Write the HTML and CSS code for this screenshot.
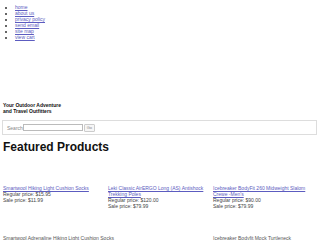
FILE: index.html
```html
<!DOCTYPE html>
<html>
<head>
<meta charset="utf-8">
<link rel="stylesheet" href="styles.css">
</head>
<body>
<ul class="nav">
  <li><a href="#">home</a></li>
  <li><a href="#">about us</a></li>
  <li><a href="#">privacy policy</a></li>
  <li><a href="#">send email</a></li>
  <li><a href="#">site map</a></li>
  <li><a href="#">view cart</a></li>
</ul>
<div class="logo-space"></div>
<div class="tagline">Your Outdoor Adventure<br>and Travel Outfitters</div>
<form class="search">
  <label>Search</label><input type="text" class="field"><button type="button" class="go">Go</button>
</form>
<h1 class="title">Featured Products</h1>
<div class="products">
  <div class="product">
    <a href="#">Smartwool Hiking Light Cushion Socks</a>
    <div>Regular price: $15.95</div>
    <div>Sale price: $11.99</div>
  </div>
  <div class="product">
    <a href="#">Leki Classic AirERGO Long (AS) Antishock Trekking Poles</a>
    <div>Regular price: $120.00</div>
    <div>Sale price: $79.99</div>
  </div>
  <div class="product">
    <a href="#">Icebreaker BodyFit 260 Midweight Slalom Crewe -Men's</a>
    <div>Regular price: $90.00</div>
    <div>Sale price: $79.99</div>
  </div>
</div>
<div class="more">
  <div class="more-left">Smartwool Adrenaline Hiking Light Cushion Socks</div>
  <div class="more-right">Icebreaker Bodyfit Mock Turtleneck</div>
</div>
</body>
</html>
```
FILE: styles.css
```css
html, body {
  margin: 0;
  padding: 0;
  background: #fff;
  overflow: hidden;
}
body {
  font-family: "Liberation Sans", Arial, sans-serif;
  font-size: 5px;
  line-height: 6px;
  color: #333;
  padding: 0 3px;
  width: 314px;
  height: 240px;
}
a {
  color: #5c5cc0;
  text-decoration: underline;
}
.nav {
  margin: 4px 0 0 0;
  padding-left: 12px;
  list-style: disc;
}
.nav li {
  height: 6px;
}
.logo-space {
  height: 62px;
}
.tagline {
  font-weight: bold;
  color: #111;
  line-height: 6px;
}
.search {
  margin: 6px 0 0 -1px;
  border: 1px solid #ddd;
  height: 13px;
  display: flex;
  align-items: center;
  padding-left: 4px;
  color: #888;
}
.search label {
  font-size: 5px;
}
.field {
  width: 58px;
  height: 5px;
  border: 1px solid #bbb;
  padding: 0;
  margin: 0;
  font-size: 5px;
}
.go {
  margin-left: 1px;
  height: 8px;
  width: 11px;
  padding: 0;
  font-size: 4px;
  border: 1px solid #ccc;
  background: #f6f6f6;
  color: #888;
  font-family: "Liberation Sans", Arial, sans-serif;
  border-radius: 1px;
}
.title {
  font-size: 12px;
  line-height: 14px;
  color: #111;
  margin: 5px 0 0 0;
  font-weight: bold;
}
.products {
  margin-top: 31px;
  display: grid;
  grid-template-columns: 105px 105px 104px;
}
.product {
  padding-right: 8px;
  color: #444;
}
.more {
  margin-top: 26px;
  display: grid;
  grid-template-columns: 210px 104px;
  color: #555;
}
```
